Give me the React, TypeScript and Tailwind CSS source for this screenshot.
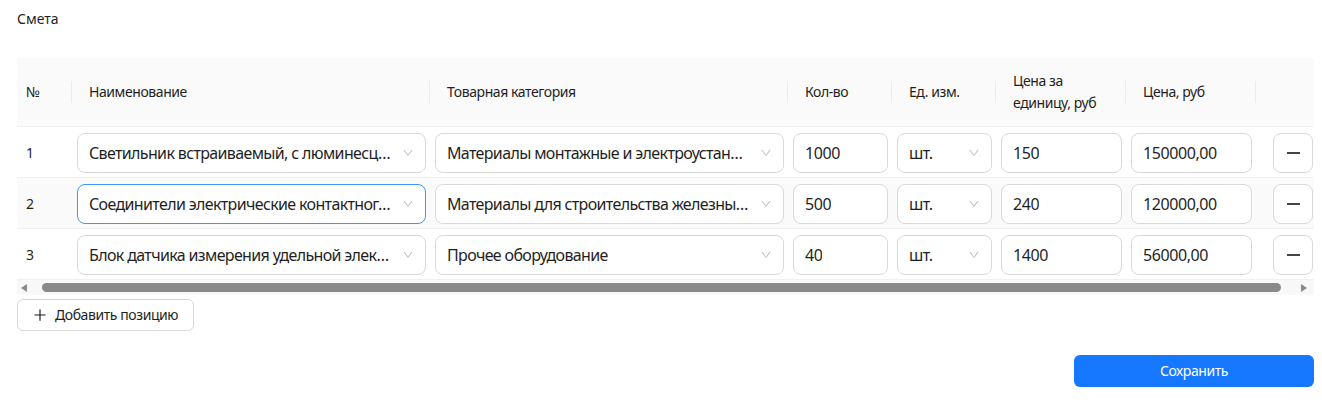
import React from "react";

const FONT = { fontFamily: '"Segoe UI", "Noto Sans", sans-serif' };

type Row = {
  n: number;
  name: string;
  category: string;
  qty: string;
  unit: string;
  price: string;
  total: string;
  focused?: boolean;
  hovered?: boolean;
};

const rows: Row[] = [
  {
    n: 1,
    name: "Светильник встраиваемый, с люминесц…",
    category: "Материалы монтажные и электроустан…",
    qty: "1000",
    unit: "шт.",
    price: "150",
    total: "150000,00",
  },
  {
    n: 2,
    name: "Соединители электрические контактног…",
    category: "Материалы для строительства железны…",
    qty: "500",
    unit: "шт.",
    price: "240",
    total: "120000,00",
    focused: true,
    hovered: true,
  },
  {
    n: 3,
    name: "Блок датчика измерения удельной элек…",
    category: "Прочее оборудование",
    qty: "40",
    unit: "шт.",
    price: "1400",
    total: "56000,00",
  },
];

const Chevron = () => (
  <svg viewBox="0 0 1024 1024" className="h-3 w-3 shrink-0" fill="#bfbfbf">
    <path d="M884 256h-75c-5.1 0-9.9 2.5-12.9 6.6L512 654.2 227.9 262.6c-3-4.1-7.8-6.6-12.9-6.6h-75c-6.5 0-10.3 7.4-6.5 12.7l352.6 486.1c12.8 17.6 39 17.6 51.7 0l352.6-486.1c3.9-5.3.1-12.7-6.4-12.7z" />
  </svg>
);

const Select = ({ value, focused }: { value: string; focused?: boolean }) => (
  <div
    className={`flex h-10 items-center rounded-lg border bg-white pl-[11px] pr-[11px] ${
      focused ? "border-[#4096ff]" : "border-[#d9d9d9]"
    }`}
  >
    <span className="min-w-0 flex-1 truncate pr-1 text-base tracking-[-0.04em] text-[#1f1f1f]">{value}</span>
    <Chevron />
  </div>
);

const Input = ({ value }: { value: string }) => (
  <div className="flex h-10 items-center rounded-lg border border-[#d9d9d9] bg-white px-[11px]">
    <span className="truncate text-base text-[#1f1f1f]">{value}</span>
  </div>
);

const COLS = "grid grid-cols-[55px_358px_358px_104px_104px_130px_130px_58px]";

const headers = ["№", "Наименование", "Товарная категория", "Кол-во", "Ед. изм.", "Цена за единицу, руб", "Цена, руб", ""];

export default function App() {
  return (
    <div
      className="min-h-screen bg-white pl-[17px] pr-[8px] pt-2 text-sm tracking-[-0.03em] text-[#1f1f1f]"
      style={FONT}
    >
      <div className="leading-[22px] tracking-normal">Смета</div>

      {/* table */}
      <div className="mt-7">
        <div className={`${COLS} border-b border-[#f0f0f0] bg-[#fafafa] leading-[22px]`}>
          {headers.map((h, i) => (
            <div
              key={i}
              className={`relative flex items-center py-3 ${i === 0 ? "pl-[9px]" : "pl-[17px]"} ${
                i === 4 ? "pl-[13px]" : ""
              } ${i === 5 ? "pr-6" : ""}`}
            >
              <span>{h}</span>
              {i < 7 && (
                <span className="absolute right-0 top-1/2 h-[22px] w-px -translate-y-1/2 bg-[#ececec]" />
              )}
            </div>
          ))}
        </div>

        {rows.map((r) => (
          <div
            key={r.n}
            className={`${COLS} border-b border-[#f0f0f0] ${r.hovered ? "bg-[#fafafa]" : "bg-white"}`}
          >
            <div className="flex items-center pb-1 pl-[9px] pt-[6px]">{r.n}</div>
            <div className="pb-1 pl-[5px] pr-1 pt-[6px]">
              <Select value={r.name} focused={r.focused} />
            </div>
            <div className="pb-1 pl-[5px] pr-1 pt-[6px]">
              <Select value={r.category} />
            </div>
            <div className="pb-1 pl-[5px] pr-1 pt-[6px]">
              <Input value={r.qty} />
            </div>
            <div className="pb-1 pl-[5px] pr-1 pt-[6px]">
              <Select value={r.unit} />
            </div>
            <div className="pb-1 pl-[5px] pr-1 pt-[6px]">
              <Input value={r.price} />
            </div>
            <div className="pb-1 pl-[5px] pr-1 pt-[6px]">
              <Input value={r.total} />
            </div>
            <div className="pb-1 pl-[17px] pt-[6px]">
              <button className="flex h-10 w-10 items-center justify-center rounded-lg border border-[#d9d9d9] bg-white">
                <span className="h-[2px] w-[13px] bg-[#444]" />
              </button>
            </div>
          </div>
        ))}

        {/* horizontal scrollbar */}
        <div className="flex h-[15px] items-center bg-[#f8f8f8]">
          <svg viewBox="0 0 6 8" className="ml-1 h-2 w-[6px]" fill="#8a8a8a">
            <path d="M6 0 L0 4 L6 8 Z" />
          </svg>
          <div className="ml-[15px] h-[9px] w-[1239px] rounded-full bg-[#8a8a8a]" />
          <svg viewBox="0 0 6 8" className="ml-auto mr-[7px] h-2 w-[6px]" fill="#8a8a8a">
            <path d="M0 0 L6 4 L0 8 Z" />
          </svg>
        </div>
      </div>

      <button className="mt-1 flex h-8 items-center gap-2 rounded-md border border-[#d9d9d9] bg-white px-[15px] leading-[22px]">
        <svg viewBox="64 64 896 896" className="h-[14px] w-[14px]" fill="#1f1f1f">
          <path d="M482 152h60q8 0 8 8v704q0 8-8 8h-60q-8 0-8-8V160q0-8 8-8z" />
          <path d="M192 474h672q8 0 8 8v60q0 8-8 8H160q-8 0-8-8v-60q0-8 8-8z" />
        </svg>
        <span>Добавить позицию</span>
      </button>

      <div className="mt-6 flex justify-end">
        <button className="h-8 w-60 rounded-md bg-[#1677ff] text-white">Сохранить</button>
      </div>
    </div>
  );
}
